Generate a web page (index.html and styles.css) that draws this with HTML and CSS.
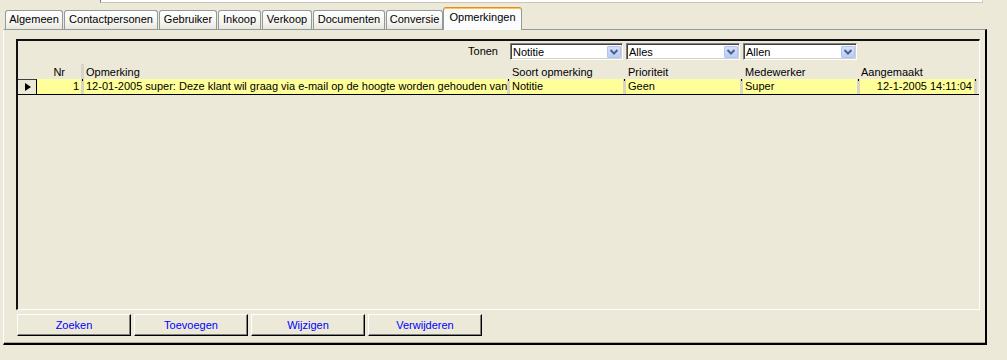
FILE: index.html
```html
<!DOCTYPE html>
<html lang="nl">
<head>
<meta charset="utf-8">
<title>Opmerkingen</title>
<link rel="stylesheet" href="styles.css">
</head>
<body>
<div class="topfield"></div>
<div class="tabs">
  <div class="tab t-alg">Algemeen</div>
  <div class="tab t-con">Contactpersonen</div>
  <div class="tab t-geb">Gebruiker</div>
  <div class="tab t-ink">Inkoop</div>
  <div class="tab t-ver">Verkoop</div>
  <div class="tab t-doc">Documenten</div>
  <div class="tab t-cnv">Conversie</div>
  <div class="tab tab-active t-opm">Opmerkingen</div>
</div>
<div class="panel">
  <div class="grid">
    <div class="row row-filter">
      <div class="lead"></div>
      <div class="label">Tonen</div>
      <div></div>
      <div class="combo"><span class="combo-text">Notitie</span><span class="combo-btn"><svg width="14" height="12" viewBox="0 0 14 12"><path d="M3.5 4 L7 7.5 L10.5 4" fill="none" stroke="#4d6185" stroke-width="2"/></svg></span></div>
      <div></div>
      <div class="combo"><span class="combo-text">Alles</span><span class="combo-btn"><svg width="14" height="12" viewBox="0 0 14 12"><path d="M3.5 4 L7 7.5 L10.5 4" fill="none" stroke="#4d6185" stroke-width="2"/></svg></span></div>
      <div></div>
      <div class="combo"><span class="combo-text">Allen</span><span class="combo-btn"><svg width="14" height="12" viewBox="0 0 14 12"><path d="M3.5 4 L7 7.5 L10.5 4" fill="none" stroke="#4d6185" stroke-width="2"/></svg></span></div>
    </div>
    <div class="row row-head">
      <div></div>
      <div class="h-nr">Nr</div>
      <div class="hsep"></div>
      <div class="h">Opmerking</div>
      <div></div>
      <div class="h">Soort opmerking</div>
      <div></div>
      <div class="h">Prioriteit</div>
      <div></div>
      <div class="h">Medewerker</div>
      <div></div>
      <div class="h h-last">Aangemaakt</div>
    </div>
    <div class="row row-data">
      <div class="selector"><span class="arrow"></span></div>
      <div class="cell num">1</div>
      <div class="sep"></div>
      <div class="cell">12-01-2005 super: Deze klant wil graag via e-mail op de hoogte worden gehouden van nieuwe producten</div>
      <div class="sep"></div>
      <div class="cell">Notitie</div>
      <div class="sep"></div>
      <div class="cell">Geen</div>
      <div class="sep"></div>
      <div class="cell">Super</div>
      <div class="sep"></div>
      <div class="cell num">12-1-2005 14:11:04</div>
      <div class="sep"></div>
    </div>
  </div>
  <div class="buttons">
    <button class="btn">Zoeken</button>
    <button class="btn">Toevoegen</button>
    <button class="btn">Wijzigen</button>
    <button class="btn">Verwijderen</button>
  </div>
</div>
</body>
</html>
```
FILE: styles.css
```css
html, body {
  margin: 0;
  padding: 0;
  background: #ece9d8;
}
body {
  font-family: "Liberation Sans", Arial, sans-serif;
  font-size: 11px;
  color: #000;
  width: 1007px;
  height: 360px;
  overflow: hidden;
}

.topfield {
  margin-left: 100px;
  width: 881px;
  height: 2px;
  background: #fff;
  border-left: 1px solid #7a7a7a;
  border-right: 1px solid #d4d0c8;
  border-bottom: 1px solid #c9c6b8;
}

.tabs {
  display: flex;
  align-items: flex-end;
  gap: 1px;
  margin-top: 4px;
  margin-left: 5px;
  height: 22px;
}
.tab {
  flex: none;
  min-width: 0;
  box-sizing: border-box;
  height: 19px;
  border: 1px solid #919b9c;
  border-bottom: none;
  border-radius: 3px 3px 0 0;
  background: linear-gradient(#ffffff, #f6f5f0 60%, #e7e6de);
  text-align: center;
  line-height: 17px;
  white-space: nowrap;
}
.t-alg { width: 58px; }
.t-con { width: 94px; }
.t-geb { width: 58px; }
.t-ink { width: 43px; }
.t-ver { width: 50px; }
.t-doc { width: 72px; }
.t-cnv { width: 57px; }
.t-opm { width: 79px; }
.tab-active {
  position: relative;
  z-index: 1;
  height: 23px;
  margin-left: -1px;
  margin-bottom: -1px;
  background: #fcfcfe;
  border-top: 1px solid #e68b2c;
  box-shadow: inset 0 1px 0 #ffc73c;
  line-height: 17px;
  padding-top: 1px;
}

.panel {
  box-sizing: border-box;
  margin-left: 3px;
  width: 984px;
  border-top: 1px solid #919b9c;
  border-left: 1px solid #ffffff;
  border-right: 2px solid #000;
  border-bottom: 2px solid #000;
  box-shadow: inset 0 -1px 0 #aca899;
  padding: 9px 0 7px 12px;
}

.grid {
  box-sizing: border-box;
  width: 964px;
  height: 271px;
  border-style: solid;
  border-width: 2px 1px 1px 2px;
  border-color: #111 #fff #fff #111;
}

.row {
  display: grid;
  grid-template-columns: 19px 44px 3px 423px 3px 113px 3px 114px 3px 114px 3px 114px 3px 1fr;
  white-space: nowrap;
}

.row-filter {
  margin-top: 2px;
  height: 17px;
  line-height: 17px;
}
.row-filter .lead { grid-column: 1 / 4; }
.label {
  text-align: right;
  padding-right: 9px;
}
.combo {
  box-sizing: border-box;
  height: 17px;
  display: flex;
  align-items: center;
  background: #fff;
  border: 1px solid;
  border-color: #808080 #ffffff #ffffff #808080;
  box-shadow: inset 1px 1px 0 #404040, inset -1px -1px 0 #d4d0c8;
  overflow: hidden;
}
.combo-text {
  flex: 1;
  padding-left: 2px;
  line-height: 14px;
}
.combo-btn {
  display: flex;
  width: 14px;
  height: 12px;
  margin-right: 1px;
  margin-top: 1px;
  border-radius: 2px;
  background: linear-gradient(#d6e3fe, #b7ccf8);
  box-shadow: inset 0 0 0 1px #b0c4f2;
}

.row-head {
  margin-top: 4px;
  height: 15px;
  line-height: 16px;
}
.h-nr {
  text-align: right;
  padding-right: 16px;
}
.hsep { background: #d8d5c8; }
.h { padding-left: 2px; overflow: hidden; }
.h-last { padding-left: 1px; }

.row-data {
  height: 16px;
  line-height: 15px;
  border-bottom: 1px solid #000;
  box-sizing: border-box;
}
.selector {
  box-sizing: border-box;
  display: flex;
  align-items: center;
  justify-content: center;
  border-top: 1px solid #404040;
  border-right: 1px solid #000;
  background: #ece9d8;
  padding-left: 1px;
}
.arrow {
  width: 0;
  height: 0;
  border-left: 6px solid #000;
  border-top: 4.5px solid transparent;
  border-bottom: 4.5px solid transparent;
}
.cell {
  background: #ffff99;
  overflow: hidden;
  padding-left: 2px;
}
.cell.num {
  text-align: right;
  padding-left: 0;
  padding-right: 2px;
}
.sep {
  background: linear-gradient(#000, #000) center top / 1px 2px no-repeat, #d8d5c8;
}

.buttons {
  display: flex;
  gap: 3px;
  margin-top: 4px;
  margin-left: 1px;
}
.btn {
  box-sizing: border-box;
  width: 114px;
  height: 22px;
  margin: 0;
  padding: 0;
  background: #ece9d8;
  border: 1px solid;
  border-color: #ffffff #000 #000 #ffffff;
  box-shadow: inset -1px -1px 0 #808080;
  color: #0000ff;
  font-family: "Liberation Sans", Arial, sans-serif;
  font-size: 11px;
  text-align: center;
}
```
